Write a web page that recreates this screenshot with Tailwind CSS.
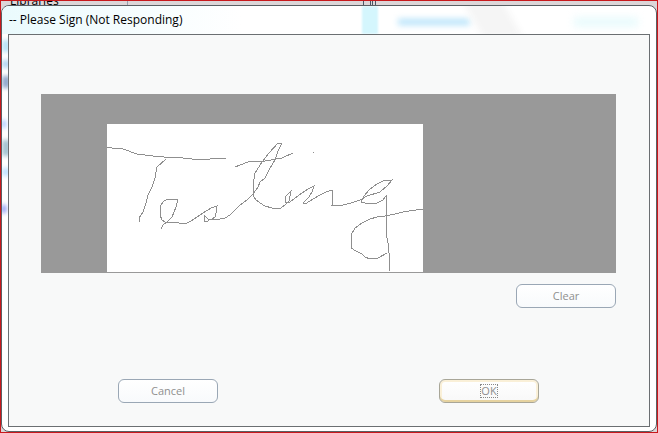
<!DOCTYPE html>
<html lang="en">
<head>
  <meta charset="UTF-8" />
  <meta name="viewport" content="width=device-width, initial-scale=1.0"/>
  <title>Please Sign</title>
  <script src="https://cdn.jsdelivr.net/npm/@tailwindcss/browser@4"></script>
</head>
<body class="relative h-screen flex flex-col overflow-hidden border border-[#c8181c] bg-[#dcd6d8] pt-1 font-['Open_Sans','Noto_Sans',sans-serif] text-xs text-black">

  <!-- Window behind the dialog -->
  <div class="absolute inset-x-0 top-0 h-1 overflow-hidden">
    <span class="absolute left-[9px] -bottom-0.5 leading-3">Libraries</span>
    <span class="absolute left-[126px] top-0 h-1 w-px bg-gray-400"></span>
    <span class="absolute left-[362px] top-0 h-1 w-2 border-x border-gray-600"></span>
    <span class="absolute left-[371px] top-0 h-1 w-1 border-x border-gray-600"></span>
  </div>

  <!-- Dialog -->
  <main class="relative flex-1 flex flex-col overflow-hidden rounded-lg border border-[#5a6064] bg-white px-1.5 pb-1">

    <!-- Shapes showing through the glass frame -->
    <div class="absolute inset-0" aria-hidden="true">
      <div class="absolute left-0 top-0 h-7 w-60 bg-linear-to-r from-[#eafafd] to-white"></div>
      <div class="absolute left-[360px] top-0 h-7 w-4 bg-[#d4f6fd] blur-[1px]"></div>
      <div class="absolute left-[396px] top-[13px] h-1.5 w-[72px] bg-[#b4e2fa] blur-[3px]"></div>
      <div class="absolute left-[470px] -top-2 h-10 w-10 skew-x-[30deg] bg-[#f5f5f5] blur-[4px]"></div>
      <div class="absolute left-[572px] top-3 h-2 w-16 bg-[#e4fafc] blur-[4px]"></div>
      <div class="absolute left-0 top-[34px] h-3 w-2 bg-[#b8e4f8] blur-[2px]"></div>
      <div class="absolute left-0 top-[54px] h-2 w-2 bg-[#b4d6f2] blur-[2px]"></div>
      <div class="absolute left-0 top-[70px] h-3 w-2 bg-[#90a8cc] blur-[2px]"></div>
      <div class="absolute left-0 top-[114px] h-2 w-1 bg-[#a4c4ff] blur-[2px]"></div>
      <div class="absolute left-0 top-[134px] h-4 w-2 bg-[#a2c2d0] blur-[2px]"></div>
      <div class="absolute left-0 top-[162px] h-2 w-2 bg-[#c0e2ff] blur-[2px]"></div>
      <div class="absolute left-0 top-[199px] h-2 w-1 bg-[#7a8cf0] blur-[2px]"></div>
    </div>

    <h1 class="relative h-7 pl-px leading-7">-- Please Sign (Not Responding)</h1>

    <form class="relative flex-1 border border-[#6b6f72] bg-[#f8f9f9] pl-8 pr-[33px] pt-[59px]">

      <!-- Signature pad -->
      <div class="bg-[#999999] pl-[66px] pt-[30px] pb-px">
        <svg class="block bg-white" width="316" height="148" viewBox="0 0 316 148" role="img" aria-label="Signature" fill="none" stroke="#8f8f8f" stroke-width="1" shape-rendering="crispEdges">
          <path d="M0 23L5 24L16 25L30 30L46 32L57 33L76 34L85 35L103 35L110 34H119"/>
          <path d="M59 35L50 43L48 54L45 63L41 71L39 79L36 88L32 94V98"/>
          <path d="M54 105L56 101L61 97L65 93L69 83L71 75H61L57 77L53 82V91L55 96L58 98L72 99H80L84 97L96 89L104 84L110 82L109 89L108 93L105 95H101L97 91V97H101L102 95H113L118 94L123 91L126 88L133 81L140 76L146 70L151 63L153 58L158 54L163 44L168 36L171 27L175 19H171L162 29L155 38L148 49L146 62V72L149 76L153 79L158 82L165 84H174L178 81L182 77L184 67L178 73V78H183L188 74L195 69L201 65L207 62L205 68L202 73L196 79L198 80L203 77L213 71L219 68L225 66L226 81H224H236L244 79L253 76L260 72L273 68L280 62L285 56L276 57L270 60L263 65L257 72L254 78L258 79H270L276 76L279 72V109L281 119L282 129V147"/>
          <path d="M128 43L141 38L158 37L175 34L186 29"/>
          <path d="M316 85L309 86L296 88L288 90L278 92L270 93L263 95L255 99L248 104L244 111V124L249 127L255 130L258 133L263 135L271 134L280 129"/>
          <path d="M206 28h1"/>
        </svg>
      </div>

      <div class="mt-[11px] flex justify-end">
        <button type="button" class="h-6 w-[100px] rounded-md border border-[#9aa7b5] bg-linear-to-b from-white to-[#f8fafc] text-[11px] text-[#8f8f8f]">Clear</button>
      </div>

      <div class="mt-[71px] flex justify-between px-[77px]">
        <button type="button" class="h-6 w-[100px] rounded-md border border-[#9aa7b5] bg-linear-to-b from-white to-[#f8fafc] text-[11px] text-[#8f8f8f]">Cancel</button>
        <button type="submit" class="h-6 w-[100px] rounded-md border border-[#a8a698] bg-linear-to-b from-white to-[#f8f8f8] text-[11px] text-[#8f8f8f] shadow-[inset_0_-2px_0_#e6d3a0,inset_0_0_0_2px_#faf0d8]"><span class="inline-block border border-dotted border-[#888888] leading-3">OK</span></button>
      </div>
    </form>
  </main>

</body>
</html>
